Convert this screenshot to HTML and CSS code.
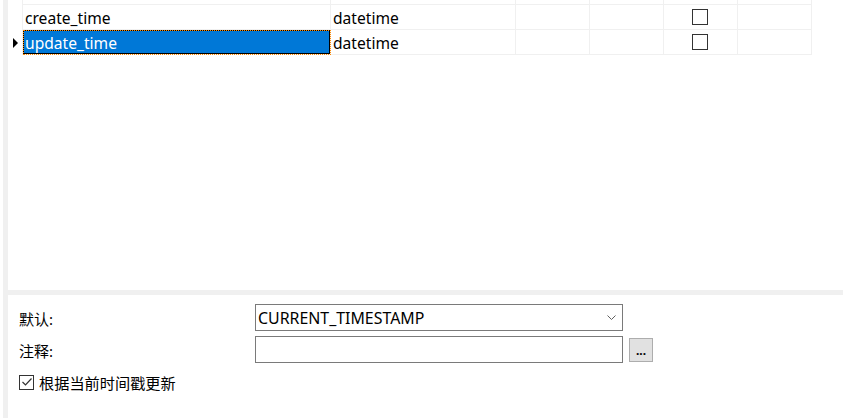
FILE: index.html
```html
<!DOCTYPE html>
<html>
<head>
<meta charset="utf-8">
<link rel="stylesheet" href="styles.css">
</head>
<body>
<div class="app">
  <div class="strip"></div>
  <div class="main">
    <div class="grid">
      <div class="row partial">
        <div class="rh"></div>
        <div class="cell c1"></div>
        <div class="cell c2"></div>
        <div class="cell c3"></div>
        <div class="cell c3"></div>
        <div class="cell c3 center"><span class="box"></span></div>
        <div class="cell c3"></div>
      </div>
      <div class="row">
        <div class="rh"></div>
        <div class="cell c1">create_time</div>
        <div class="cell c2">datetime</div>
        <div class="cell c3"></div>
        <div class="cell c3"></div>
        <div class="cell c3 center"><span class="box"></span></div>
        <div class="cell c3"></div>
      </div>
      <div class="row">
        <div class="rh"><span class="arrow"></span></div>
        <div class="cell c1 sel">update_time</div>
        <div class="cell c2">datetime</div>
        <div class="cell c3"></div>
        <div class="cell c3"></div>
        <div class="cell c3 center"><span class="box"></span></div>
        <div class="cell c3"></div>
      </div>
    </div>
    <div class="band"></div>
    <div class="form">
      <div class="frow">
        <label class="lbl">默认:</label>
        <div class="combo">
          <span class="ctext">CURRENT_TIMESTAMP</span>
          <svg class="chev" width="9" height="5" viewBox="0 0 9 5"><path d="M0.5 0.5 L4.5 4.5 L8.5 0.5" fill="none" stroke="#606060" stroke-width="1"/></svg>
        </div>
      </div>
      <div class="frow">
        <label class="lbl">注释:</label>
        <div class="tbox"></div>
        <div class="btn">...</div>
      </div>
      <div class="crow">
        <span class="cbox"><svg width="12" height="12" viewBox="0 0 12 12"><path d="M1.5 6 L4.5 9 L10.5 2.5" fill="none" stroke="#333" stroke-width="1.2"/></svg></span>
        <span class="clbl">根据当前时间戳更新</span>
      </div>
    </div>
  </div>
</div>
</body>
</html>
```
FILE: styles.css
```css
* { box-sizing: border-box; }
html, body { margin: 0; padding: 0; background: #fff; }
body {
  font-family: "Noto Sans", "Noto Sans CJK SC", sans-serif;
  font-size: 15px;
  color: #000;
  width: 843px;
  height: 418px;
  overflow: hidden;
}
.app { display: flex; height: 418px; }
.strip { width: 5px; margin-left: 3px; background: #f0f0f0; flex: none; }
.main { flex: 1; display: flex; flex-direction: column; }
.grid { height: 290px; overflow: hidden; }
.row { display: flex; height: 25px; }
.row.partial { margin-top: -20px; }
.rh { width: 15px; flex: none; border-right: 1px solid #f0f0f0; display: flex; align-items: center; padding-left: 5px; }
.arrow { width: 0; height: 0; border-left: 5px solid #000; border-top: 5.5px solid transparent; border-bottom: 5.5px solid transparent; }
.cell { border-right: 1px solid #f0f0f0; border-bottom: 1px solid #f0f0f0; padding: 1px 0 0 2px; line-height: 24px; white-space: nowrap; flex: none; font-size: 15.6px; }
.c1 { width: 308px; }
.c2 { width: 185px; }
.c3 { width: 74px; }
.center { display: flex; align-items: center; justify-content: center; padding: 0; }
.box { width: 16px; height: 16px; border: 1px solid #333; background: #fff; margin-left: -2px; }
.sel {
  background: #0078d7;
  color: #fff;
  box-shadow: inset 0 0 0 1px #000;
  outline: 1px dotted #ff8a00;
  outline-offset: -1px;
  background-clip: padding-box;
}
.band { height: 5px; background: #f0f0f0; flex: none; }
.form { padding: 9px 0 0 11px; display: flex; flex-direction: column; gap: 5px; }
.frow { display: flex; align-items: center; height: 27px; }
.lbl { width: 236px; flex: none; padding-top: 1px; }
.combo { width: 368px; height: 27px; border: 1px solid #7a7a7a; display: flex; align-items: center; justify-content: space-between; padding: 0 6px 0 2px; }
.ctext { font-size: 15.9px; }
.tbox { width: 368px; height: 27px; border: 1px solid #7a7a7a; }
.btn { width: 24px; height: 24px; margin-left: 6px; background: #e1e1e1; border: 1px solid #adadad; font-size: 12px; font-weight: bold; text-align: center; line-height: 24px; color: #000; }
.crow { display: flex; align-items: center; margin-top: 6px; height: 16px; }
.cbox { width: 15px; height: 15px; border: 1px solid #333; display: flex; align-items: center; justify-content: center; background: #fff; }
.clbl { margin-left: 5px; font-size: 15.2px; }
```
